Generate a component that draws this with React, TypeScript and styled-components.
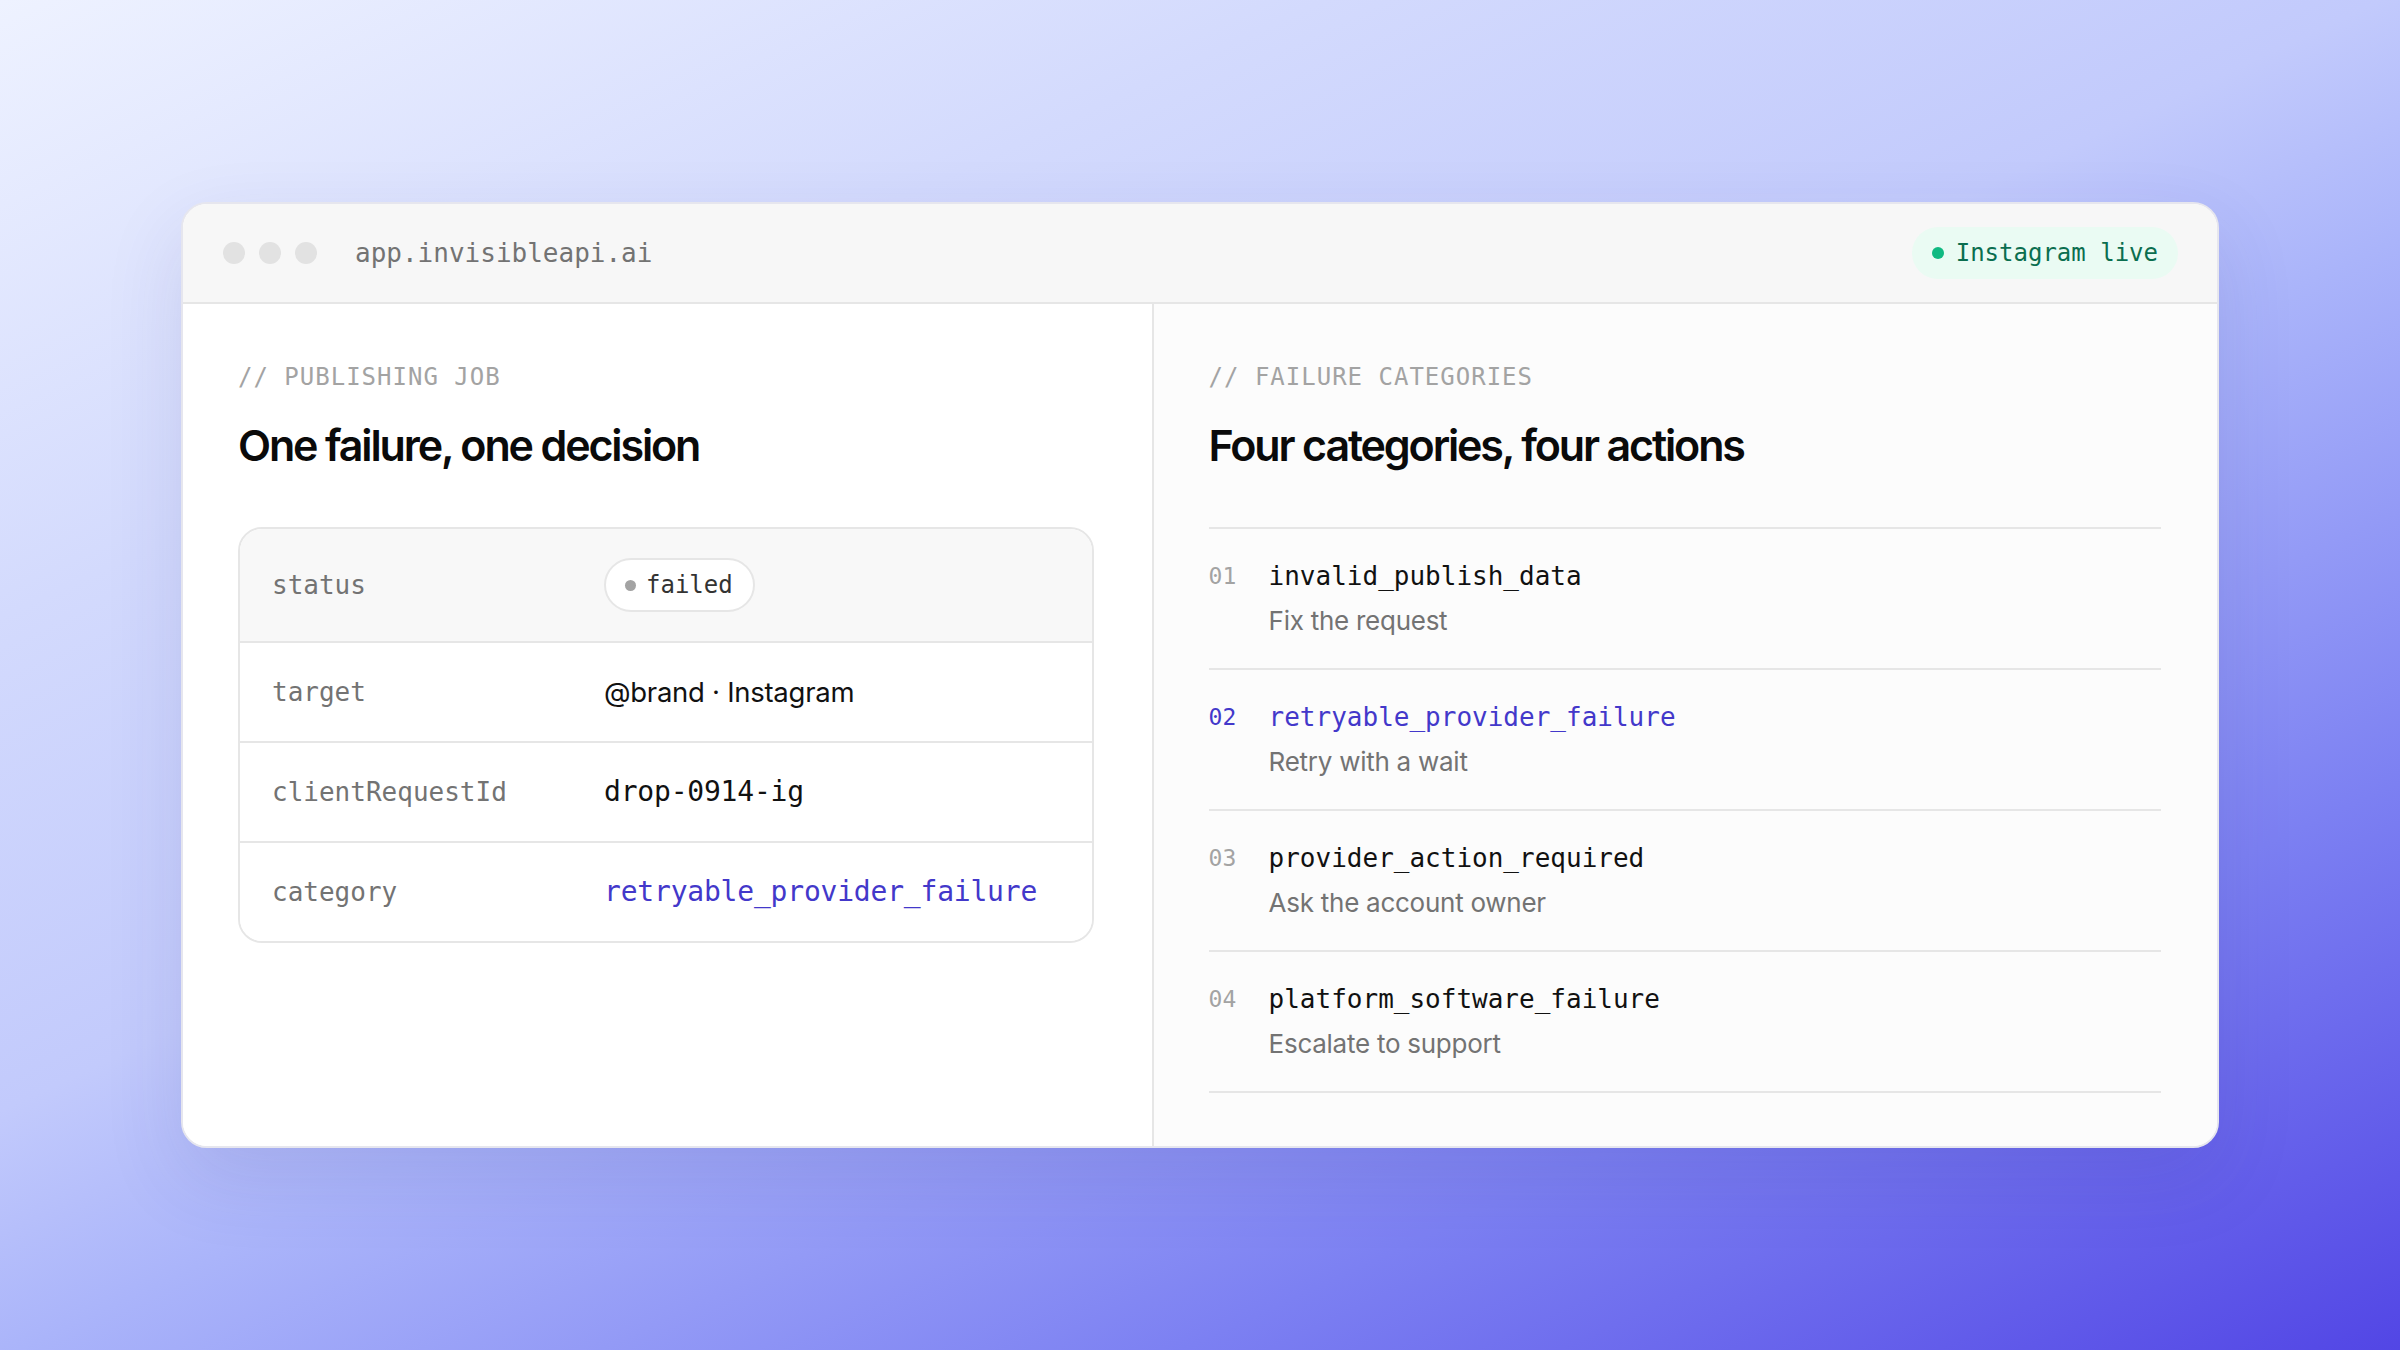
import React from "react";
import styled, { createGlobalStyle } from "styled-components";

const GlobalStyle = createGlobalStyle`
  html, body { margin: 0; padding: 0; }
  body {
    font-family: Inter, "Noto Sans", sans-serif;
    -webkit-font-smoothing: antialiased;
  }
  * { box-sizing: border-box; }
`;

const MONO = `"DejaVu Sans Mono", "Liberation Mono", monospace`;
const SANS = `Inter, "Noto Sans", sans-serif`;

const Stage = styled.main`
  width: 100vw;
  height: 100vh;
  display: flex;
  align-items: center;
  justify-content: center;
  background: linear-gradient(
    155deg,
    #eef2ff 0%,
    #d3dafd 25%,
    #c2cafc 45%,
    #aab4fa 55%,
    #7c80f2 77%,
    #5246e5 100%
  );
`;

const Window = styled.section`
  width: 2038px;
  background: #ffffff;
  border: 2px solid #e6e6ee;
  border-radius: 26px;
  overflow: hidden;
  box-shadow: 0 30px 80px rgba(49, 46, 129, 0.12);
`;

const TitleBar = styled.header`
  height: 100px;
  display: flex;
  align-items: center;
  padding: 0 39px 0 40px;
  background: #f7f7f7;
  border-bottom: 2px solid #e6e6e6;
`;

const Dots = styled.div`
  display: flex;
  gap: 14px;
  margin-right: 38px;
`;

const Dot = styled.span`
  width: 22px;
  height: 22px;
  border-radius: 50%;
  background: #e2e2e2;
`;

const Url = styled.span`
  font-family: ${MONO};
  font-size: 26px;
  color: #737373;
  flex: 1;
`;

const LiveBadge = styled.span`
  height: 52px;
  display: inline-flex;
  align-items: center;
  gap: 12px;
  padding: 0 20px;
  border-radius: 999px;
  background: #eafbf3;
  font-family: ${MONO};
  font-size: 24px;
  color: #0b6e4f;
`;

const StatusDot = styled.span<{ $color: string; $size?: number }>`
  width: ${(p) => p.$size ?? 12}px;
  height: ${(p) => p.$size ?? 12}px;
  border-radius: 50%;
  background: ${(p) => p.$color};
  flex: none;
`;

const Body = styled.div`
  display: grid;
  grid-template-columns: 1fr 1.1fr;
`;

const Panel = styled.div<{ $tinted?: boolean }>`
  padding: 56px 58px 53px 55px;
  background: ${(p) => (p.$tinted ? "#fcfcfc" : "#ffffff")};
  & + & {
    border-left: 2px solid #e6e6e6;
    padding-left: 55px;
    padding-right: 56px;
  }
`;

const Eyebrow = styled.div`
  font-family: ${MONO};
  font-size: 24px;
  line-height: 34px;
  letter-spacing: 1px;
  color: #a3a3a3;
`;

const Heading = styled.h2`
  margin: 26px 0 56px;
  font-family: ${SANS};
  font-size: 43px;
  line-height: 51px;
  font-weight: 600;
  letter-spacing: -0.05em;
  color: #0a0a0a;
`;

const Table = styled.div`
  border: 2px solid #e6e6e6;
  border-radius: 24px;
  overflow: hidden;
`;

const TableRow = styled.div<{ $head?: boolean }>`
  display: grid;
  grid-template-columns: 332px 1fr;
  align-items: center;
  padding: 29px 32px;
  background: ${(p) => (p.$head ? "#f8f8f8" : "#ffffff")};
  & + & {
    border-top: 2px solid #e6e6e6;
  }
`;

const Label = styled.span`
  font-family: ${MONO};
  font-size: 26px;
  line-height: 40px;
  color: #737373;
`;

const Value = styled.span<{ $mono?: boolean; $accent?: boolean }>`
  font-family: ${(p) => (p.$mono ? MONO : SANS)};
  font-size: ${(p) => (p.$mono ? "28px" : "27.5px")};
  line-height: 40px;
  color: ${(p) => (p.$accent ? "#4338ca" : "#111111")};
  letter-spacing: ${(p) => (p.$mono ? "-0.2px" : "-0.01em")};
`;

const Pill = styled.span`
  justify-self: start;
  height: 54px;
  display: inline-flex;
  align-items: center;
  gap: 10px;
  padding: 0 20px 0 19px;
  border: 2px solid #e6e6e6;
  border-radius: 999px;
  background: #ffffff;
  font-family: ${MONO};
  font-size: 24px;
  color: #333333;
`;

const List = styled.ol`
  list-style: none;
  margin: 0;
  padding: 0;
  border-top: 2px solid #e6e6e6;
`;

const Item = styled.li`
  display: grid;
  grid-template-columns: 60px 1fr;
  grid-template-rows: 36px 36px;
  row-gap: 9px;
  padding: 29px 0;
  border-bottom: 2px solid #e6e6e6;
`;

const Num = styled.span<{ $accent?: boolean }>`
  font-family: ${MONO};
  font-size: 23px;
  line-height: 36px;
  color: ${(p) => (p.$accent ? "#4338ca" : "#a3a3a3")};
`;

const Code = styled.span<{ $accent?: boolean }>`
  font-family: ${MONO};
  font-size: 26px;
  line-height: 36px;
  color: ${(p) => (p.$accent ? "#4338ca" : "#111111")};
`;

const Action = styled.span`
  grid-column: 2;
  font-family: ${SANS};
  font-size: 26px;
  line-height: 36px;
  color: #737373;
  letter-spacing: -0.01em;
`;

const rows = [
  { label: "target", value: "@brand · Instagram", mono: false, accent: false },
  { label: "clientRequestId", value: "drop-0914-ig", mono: true, accent: false },
  { label: "category", value: "retryable_provider_failure", mono: true, accent: true },
];

const categories = [
  { n: "01", code: "invalid_publish_data", action: "Fix the request" },
  { n: "02", code: "retryable_provider_failure", action: "Retry with a wait", accent: true },
  { n: "03", code: "provider_action_required", action: "Ask the account owner" },
  { n: "04", code: "platform_software_failure", action: "Escalate to support" },
];

export default function App() {
  return (
    <>
      <GlobalStyle />
      <Stage>
        <Window>
          <TitleBar>
            <Dots>
              <Dot />
              <Dot />
              <Dot />
            </Dots>
            <Url>app.invisibleapi.ai</Url>
            <LiveBadge>
              <StatusDot $color="#10b981" />
              Instagram live
            </LiveBadge>
          </TitleBar>
          <Body>
            <Panel>
              <Eyebrow>// PUBLISHING JOB</Eyebrow>
              <Heading>One failure, one decision</Heading>
              <Table>
                <TableRow $head>
                  <Label>status</Label>
                  <Pill>
                    <StatusDot $color="#a3a3a3" $size={11} />
                    failed
                  </Pill>
                </TableRow>
                {rows.map((r) => (
                  <TableRow key={r.label}>
                    <Label>{r.label}</Label>
                    <Value $mono={r.mono} $accent={r.accent}>
                      {r.value}
                    </Value>
                  </TableRow>
                ))}
              </Table>
            </Panel>
            <Panel $tinted>
              <Eyebrow>// FAILURE CATEGORIES</Eyebrow>
              <Heading>Four categories, four actions</Heading>
              <List>
                {categories.map((c) => (
                  <Item key={c.n}>
                    <Num $accent={c.accent}>{c.n}</Num>
                    <Code $accent={c.accent}>{c.code}</Code>
                    <Action>{c.action}</Action>
                  </Item>
                ))}
              </List>
            </Panel>
          </Body>
        </Window>
      </Stage>
    </>
  );
}
